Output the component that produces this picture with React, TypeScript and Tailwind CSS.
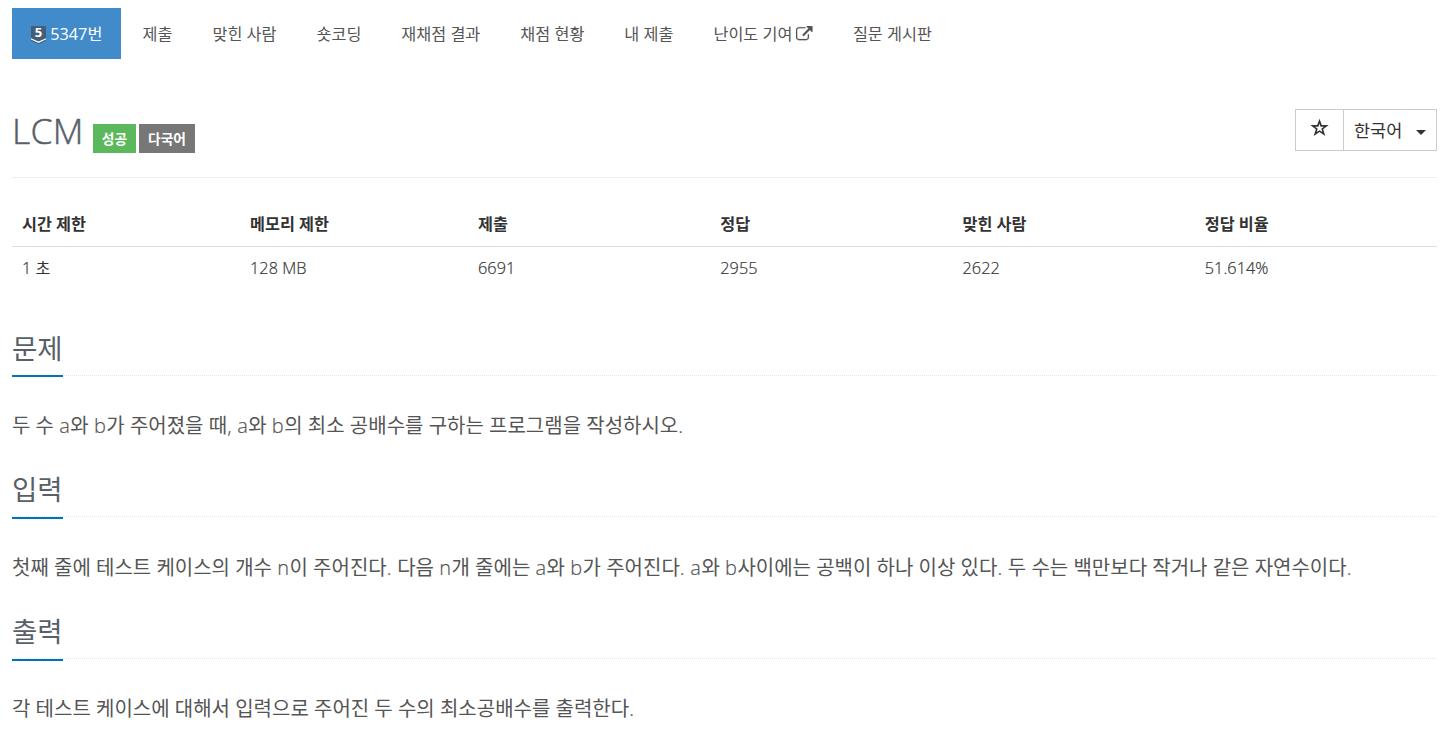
import React from "react";
import clsx from "clsx";

interface NavItem {
  label: string;
  active?: boolean;
  external?: boolean;
}

const navItems: NavItem[] = [
  { label: "5347번", active: true },
  { label: "제출" },
  { label: "맞힌 사람" },
  { label: "숏코딩" },
  { label: "재채점 결과" },
  { label: "채점 현황" },
  { label: "내 제출" },
  { label: "난이도 기여", external: true },
  { label: "질문 게시판" },
];

const stats = [
  { title: "시간 제한", value: "1 초" },
  { title: "메모리 제한", value: "128 MB" },
  { title: "제출", value: "6691" },
  { title: "정답", value: "2955" },
  { title: "맞힌 사람", value: "2622" },
  { title: "정답 비율", value: "51.614%" },
];

const sections = [
  {
    title: "문제",
    body: "두 수 a와 b가 주어졌을 때, a와 b의 최소 공배수를 구하는 프로그램을 작성하시오.",
  },
  {
    title: "입력",
    body: "첫째 줄에 테스트 케이스의 개수 n이 주어진다. 다음 n개 줄에는 a와 b가 주어진다. a와 b사이에는 공백이 하나 이상 있다. 두 수는 백만보다 작거나 같은 자연수이다.",
  },
  {
    title: "출력",
    body: "각 테스트 케이스에 대해서 입력으로 주어진 두 수의 최소공배수를 출력한다.",
  },
];

// latin letters and digits are set light, hangul stays regular
const MixedText: React.FC<{ text: string }> = ({ text }) => (
  <>
    {text.split(/([A-Za-z0-9.,%]+)/).map((part, i) =>
      i % 2 ? (
        <span key={i} className="font-light [-webkit-text-stroke:0.2px_currentColor]">
          {part}
        </span>
      ) : (
        part
      )
    )}
  </>
);

const TierBadge = () => (
  <svg viewBox="0 0 15 18" className="w-[15px] h-[18px] mr-[4.5px] mt-[3px] shrink-0 overflow-visible">
    <path d="M0 0h15v14.800L7.500 18.300 0 14.800z" fill="#435f7a" />
    <path d="M0 12.200l7.500 3.300 7.500-3.300v1.300L7.500 16.900 0 13.500z" fill="#fff" />
    <text
      x="7.5"
      y="11.4"
      textAnchor="middle"
      fontSize="13"
      fontWeight="700"
      fontFamily="Open Sans, sans-serif"
      fill="#fff"
    >
      5
    </text>
  </svg>
);

const ExternalIcon = () => (
  <svg
    viewBox="0 0 1792 1792"
    className="size-[16.5px] ml-[4px] mt-px shrink-0"
    fill="currentColor"
    stroke="currentColor"
    strokeWidth="20"
  >
    <path d="M1408 928v320q0 119-84.500 203.500T1120 1536H288q-119 0-203.500-84.500T0 1248V416q0-119 84.500-203.500T288 128h704q14 0 23 9t9 23v64q0 14-9 23t-23 9H288q-66 0-113 47t-47 113v832q0 66 47 113t113 47h832q66 0 113-47t47-113V928q0-14 9-23t23-9h64q14 0 23 9t9 23zm384-864v512q0 26-19 45t-45 19-45-19l-176-176-652 652q-10 10-23 10t-23-10L695 983q-10-10-10-23t10-23l652-652-176-176q-19-19-19-45t19-45 45-19h512q26 0 45 19t19 45z" />
  </svg>
);

const Nav = () => (
  <ul className="flex gap-[2.5px]">
    {navItems.map((item) => (
      <li
        key={item.label}
        className={clsx(
          "flex items-center h-[51px] px-[18.75px] text-[16.25px] leading-6 whitespace-nowrap",
          item.active ? "w-[109.3px] bg-[#428bca] text-white" : "text-[#555]"
        )}
      >
        {item.active && <TierBadge />}
        {item.label}
        {item.external && <ExternalIcon />}
      </li>
    ))}
  </ul>
);

const Title = () => (
  <div className="flex justify-between h-[119px] pt-[50px] border-b border-[#eee]">
    <div className="flex items-start">
      <h1 className="w-[81px] text-[35.5px] leading-[42px] font-light tracking-[0.3px] text-[#585f69] [-webkit-text-stroke:0.5px_currentColor]">
        LCM
      </h1>
      <span className="mt-[15px] h-[29px] w-[43px] text-center bg-[#5cb85c] text-white text-[13.75px] leading-[29px] font-semibold">
        성공
      </span>
      <span className="mt-[15px] ml-[3px] h-[29px] w-[56px] text-center bg-[#777] text-white text-[13.75px] leading-[29px] font-semibold">
        다국어
      </span>
    </div>
    <div className="flex h-[42px] w-[142px] border border-[#ccc] text-[#333]">
      <button className="w-[48px] border-r border-[#ccc] flex items-center justify-center">
        <svg viewBox="0 0 18 18" className="size-[19px] -mt-[5px] -ml-px" fill="currentColor" fillRule="evenodd">
          <path d="M9 .8l2.200 5.900h6.500l-5.200 4 2 6.300L9 13.200 3.500 17l2-6.300-5.200-4h6.500zM9 5.200L8 8.200H4.800l2.500 2-1 3.100L9 11.500l2.700 1.800-1-3.100 2.500-2H10z" />
        </svg>
      </button>
      <button className="flex flex-1 items-center pl-2.5 text-[17.5px]">
        한국어
        <span className="ml-[13.500px] mt-1 border-x-[5px] border-t-[5px] border-x-transparent border-t-[#333]" />
      </button>
    </div>
  </div>
);

const Stats = () => (
  <table className="mt-[22px] w-full table-fixed text-left text-[16.25px] text-[#333]">
    <colgroup>
      <col className="w-[16%]" />
      <col className="w-[16%]" />
      <col className="w-[17%]" />
      <col className="w-[17%]" />
      <col className="w-[17%]" />
      <col className="w-[17%]" />
    </colgroup>
    <thead>
      <tr className="h-[46px] border-b border-[#ddd]">
        {stats.map((s) => (
          <th key={s.title} className="px-2.5 pt-[3px] font-bold">
            {s.title}
          </th>
        ))}
      </tr>
    </thead>
    <tbody>
      <tr className="h-[43px]">
        {stats.map((s) => (
          <td key={s.title} className="px-2.5 tracking-[0.05px]">
            <MixedText text={s.value} />
          </td>
        ))}
      </tr>
    </tbody>
  </table>
);

interface SectionProps {
  title: string;
  body: string;
}

const Section: React.FC<SectionProps> = ({ title, body }) => (
  <section className="h-[141.6px]">
    <div className="h-[52px] border-b border-dotted border-[#e2e6ee]">
      <h2 className="inline-block h-[53.6px] border-b-2 border-[#0074b7] text-[27.5px] leading-[49.5px] text-[#585f69]">
        {title}
      </h2>
    </div>
    <p className="pt-[32.2px] text-[20px] leading-[36px] text-[#555] whitespace-nowrap [&>span]:tracking-[0.5px]">
      <MixedText text={body} />
    </p>
  </section>
);

const App = () => (
  <main className="h-[737px] overflow-hidden bg-white pl-3 pr-[7px] pt-2 font-['Open_Sans','Noto_Sans_CJK_KR',sans-serif]">
    <Nav />
    <Title />
    <Stats />
    <div className="mt-[34.8px]">
      {sections.map((s) => (
        <Section key={s.title} title={s.title} body={s.body} />
      ))}
    </div>
  </main>
);

export default App;
